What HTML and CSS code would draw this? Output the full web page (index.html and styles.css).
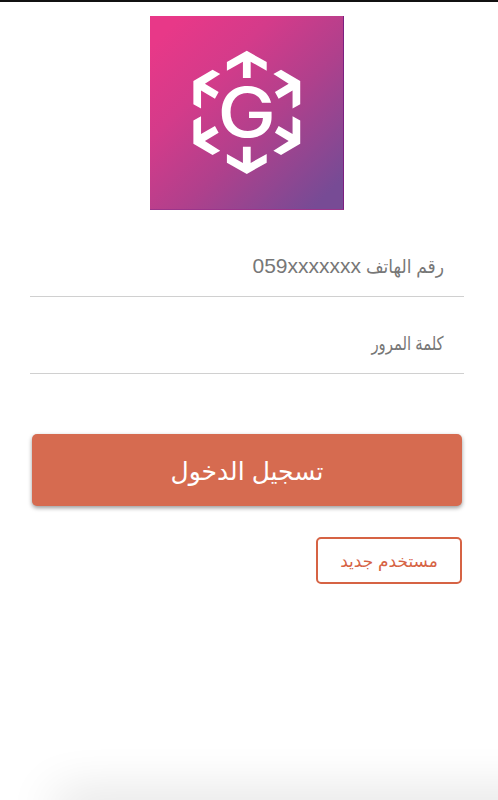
FILE: index.html
```html
<!DOCTYPE html>
<html lang="ar" dir="rtl">
<head>
    <meta charset="UTF-8">
    <meta name="viewport" content="width=device-width, initial-scale=1.0">
    <title>تسجيل الدخول</title>
    <link rel="stylesheet" href="styles.css">
</head>
<body>
    <div class="login-page">
        <svg class="logo" viewBox="0 0 194 194" role="img" aria-label="G">
            <defs>
                <path id="arrow-up" d="M97.3 35 117.3 46.3V55L101.2 46V62.3H93.4V46L77.3 55V46.3Z"/>
                <path id="arrow-corner" d="M124 58.3 131.7 54 151 65.3V88.7L143.3 93V75L129.3 83.1 125.6 76.4 139.4 68Z"/>
            </defs>
            <g fill="#fff">
                <use href="#arrow-up"/>
                <use href="#arrow-up" transform="translate(0 193.7) scale(1 -1)"/>
                <use href="#arrow-corner"/>
                <use href="#arrow-corner" transform="translate(194.6 0) scale(-1 1)"/>
                <use href="#arrow-corner" transform="translate(0 193.7) scale(1 -1)"/>
                <use href="#arrow-corner" transform="translate(194.6 193.7) scale(-1 -1)"/>
                <text class="logo-letter" transform="translate(97.3 122) scale(1.14 1)" text-anchor="middle">G</text>
            </g>
        </svg>

        <form class="login-form">
            <div class="field" contenteditable="true">
                <span class="hint hint-phone">رقم الهاتف</span>
                <span class="hint-number" dir="ltr">059xxxxxxx</span>
            </div>
            <div class="field" contenteditable="true">
                <span class="hint hint-password">كلمة المرور</span>
            </div>
            <button type="button" class="login-button">تسجيل الدخول</button>
            <button type="button" class="register-button">مستخدم جديد</button>
        </form>
    </div>
    <div class="bottom-shade"></div>
</body>
</html>
```
FILE: styles.css
```css
* {
    box-sizing: border-box;
}

body {
    margin: 0;
    height: 800px;
    overflow: hidden;
    position: relative;
    background-color: #fff;
    border-top: 2px solid #111;
    font-family: "Liberation Sans", "DejaVu Sans", sans-serif;
}

.login-page {
    display: flex;
    flex-direction: column;
    padding: 14px 34px 0 30px;
}

.logo {
    width: 194px;
    height: 194px;
    align-self: center;
    background: linear-gradient(135deg, #e83888 8%, #d43b8a 32%, #b0408c 58%, #774b95 92%);
    border-right: 1px solid #7b2080;
    border-bottom: 1px solid #9b358b;
}

.logo-letter {
    font-family: Inter, sans-serif;
    font-size: 69px;
    font-weight: 500;
}

.login-form {
    display: flex;
    flex-direction: column;
    margin-top: 26px;
}

.field {
    display: flex;
    align-items: center;
    gap: 5px;
    height: 61px;
    margin-bottom: 16px;
    padding: 0 20px;
    border-bottom: 1px solid #d0d0d0;
    outline: none;
    color: #777;
    font-size: 21px;
}

.hint {
    font-size: 19px;
    white-space: nowrap;
    transform-origin: right center;
}

.hint-phone {
    width: 78px;
    transform: scaleX(0.9);
}

.hint-password {
    transform: scaleX(0.78);
}

.login-button {
    height: 72px;
    margin: 44px 2px 31px;
    padding: 2px 0 0;
    border: none;
    border-radius: 5px;
    background-color: #d66b50;
    box-shadow: 0 2px 4px rgba(0, 0, 0, 0.4);
    color: #fff;
    font-family: inherit;
    font-size: 25px;
}

.register-button {
    align-self: flex-start;
    width: 146px;
    height: 47px;
    margin: 0 2px;
    padding: 2px 0 0;
    border: 2px solid #d66344;
    border-radius: 5px;
    background: none;
    color: #d66344;
    font-family: inherit;
    font-size: 17px;
}

/* soft grey fade along the bottom edge */
.bottom-shade {
    position: absolute;
    bottom: -20px;
    left: 60px;
    right: -60px;
    height: 20px;
    box-shadow: 0 0 50px 4px rgba(0, 0, 0, 0.16);
}
```
